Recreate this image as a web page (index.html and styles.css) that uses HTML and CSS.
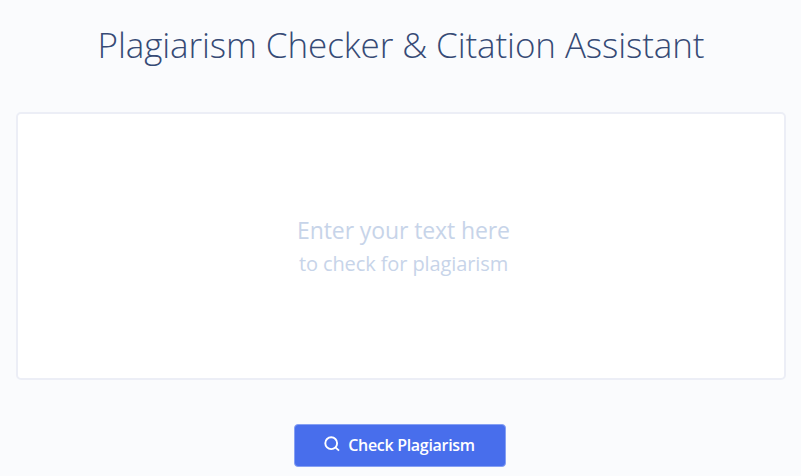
FILE: index.html
```html
<!DOCTYPE html>
<html lang="en">
<head>
  <meta charset="UTF-8">
  <meta name="viewport" content="width=device-width, initial-scale=1.0">
  <title>Plagiarism Checker</title>
  <link rel="stylesheet" href="styles.css">
</head>
<body>
  <div class="checker">
    <h1><span>Plagiarism Checker &amp; Citation Assistant</span></h1>
    <div class="text-box">
      <p class="hint-main"><span>Enter your text here</span></p>
      <p class="hint-sub"><span>to check for plagiarism</span></p>
    </div>
    <button class="check-button">
      <svg class="search-icon" viewBox="0 0 16 16" fill="none" stroke="currentColor" stroke-width="1.9">
        <circle cx="7.2" cy="7.2" r="5.9"></circle>
        <path d="M11.4 11.4L15 14.6"></path>
      </svg>
      <span>Check Plagiarism</span>
    </button>
  </div>
</body>
</html>
```

FILE: styles.css
```css
* {
  box-sizing: border-box;
}
body {
  margin: 0;
  background: #fafbfd;
  font-family: 'Open Sans', sans-serif;
}
.checker {
  display: flex;
  flex-direction: column;
  align-items: center;
  height: 476px;
  padding: 21px 15px 0 16px;
  overflow: hidden;
}
h1 {
  margin: 0 0 43px;
  font-size: 35px;
  font-weight: 300;
  line-height: 48px;
  letter-spacing: -0.1px;
  color: #364a75;
  white-space: nowrap;
}
.text-box {
  display: flex;
  flex-direction: column;
  align-items: center;
  width: 100%;
  height: 268px;
  padding: 99px 0 0 5px;
  background: #fff;
  border: 2px solid #eceef6;
  border-radius: 5px;
  color: #c7d4e9;
}
.text-box p {
  margin: 0;
  white-space: nowrap;
}
.hint-main {
  font-size: 23px;
  line-height: 34px;
  letter-spacing: -0.1px;
}
.hint-sub {
  font-size: 20px;
  line-height: 34px;
  letter-spacing: -0.1px;
}
.check-button {
  display: flex;
  align-items: center;
  justify-content: center;
  gap: 8px;
  width: 212px;
  height: 43px;
  margin: 44px 3px 0 0;
  padding: 0 0 2px;
  background: #486eec;
  border: 1px solid #86a0f3;
  border-radius: 4px;
  color: #fff;
  font-family: 'Open Sans', sans-serif;
  font-size: 16px;
  font-weight: 600;
  letter-spacing: -0.3px;
  white-space: nowrap;
}
.search-icon {
  width: 16px;
  height: 16px;
  margin-bottom: 1px;
}
```
